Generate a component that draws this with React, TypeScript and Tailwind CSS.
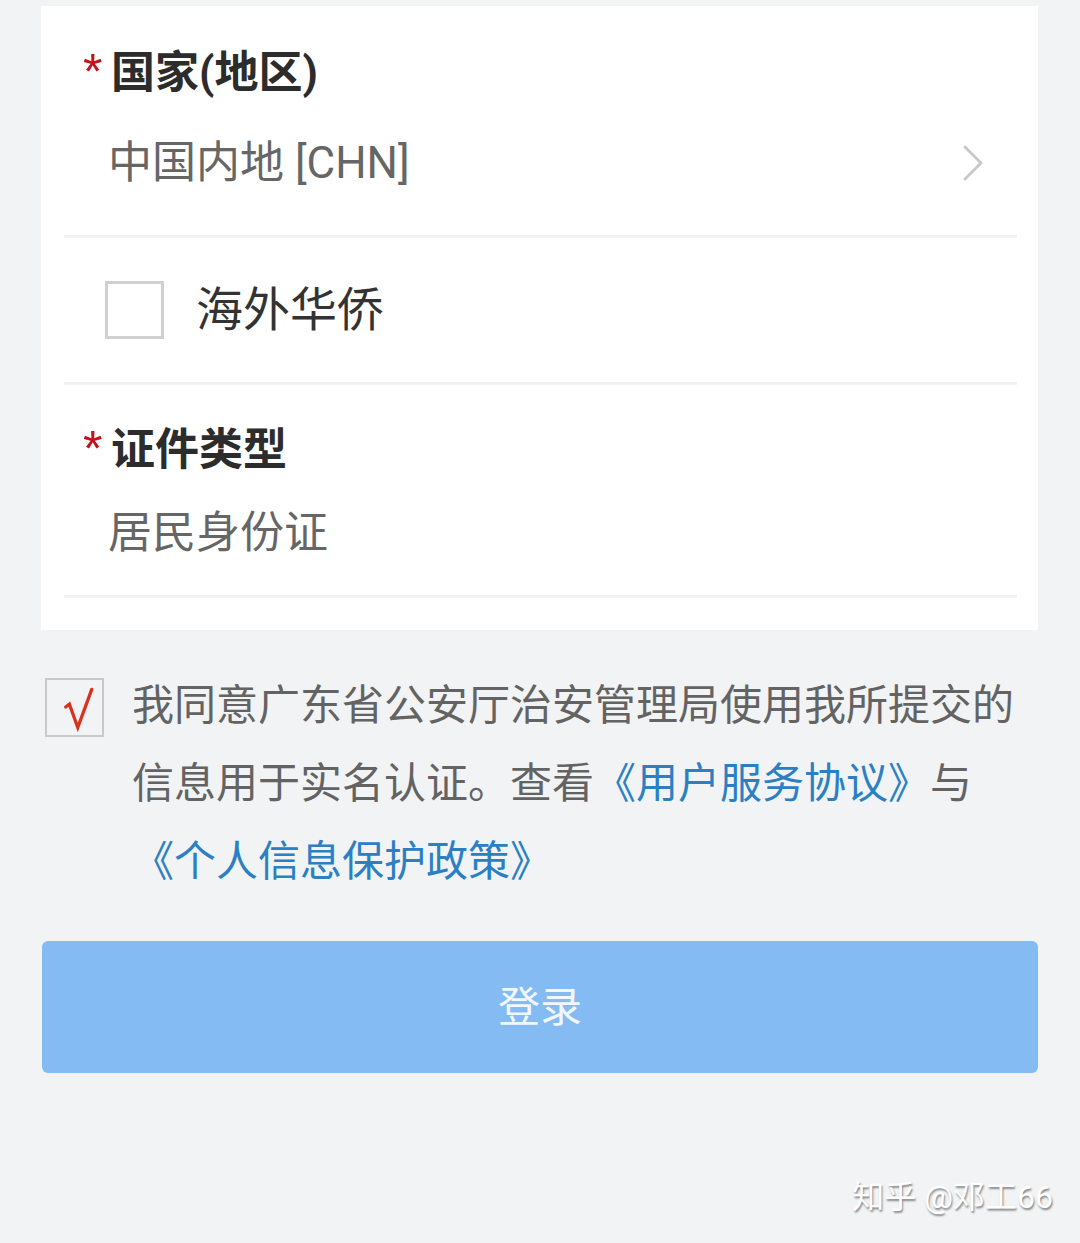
const FONT = "font-['Roboto','Noto_Sans_CJK_SC',sans-serif]";

function Required({ text }: { text: string }) {
  return (
    <div className="flex items-start pl-[19px] h-[56px]">
      <span className="w-[28px] text-[50px] leading-[48px] mt-[3px] text-[#c4121b] font-['Liberation_Sans',sans-serif]">
        *
      </span>
      <span className="text-[44px] leading-[56px] font-bold text-[#2c2c2c]">{text}</span>
    </div>
  );
}

function Divider() {
  return <div className="h-[3px] bg-[#f1f1f1]" />;
}

function ChevronRight() {
  return (
    <svg width="22" height="38" viewBox="0 0 22 38" fill="none">
      <polyline points="3,3 19,19 3,35" stroke="#c9c9c9" strokeWidth="3" strokeLinecap="round" strokeLinejoin="round" />
    </svg>
  );
}

function CheckMark() {
  return (
    <svg width="59" height="59" viewBox="0 0 59 59" fill="none">
      <polyline
        points="20,29 24,26 33,51 48,10"
        stroke="#d8321f"
        strokeWidth="3.5"
        strokeLinecap="round"
        strokeLinejoin="miter"
      />
    </svg>
  );
}

export default function App() {
  return (
    <div className={`relative w-[1080px] h-[1243px] bg-[#f2f3f5] pt-[6px] pl-[41px] pr-[42px] ${FONT}`}>
      {/* Form card */}
      <div className="bg-white pl-[23px] pr-[21px] pb-[32px]">
        {/* Country */}
        <div className="pt-[39px] pb-[44px]">
          <Required text="国家(地区)" />
          <div className="flex items-center justify-between mt-[34px] h-[56px] pl-[44px] pr-[33px]">
            <span className="text-[44px] leading-[56px] text-[#666666]">中国内地 [CHN]</span>
            <ChevronRight />
          </div>
        </div>
        <Divider />

        {/* Overseas Chinese */}
        <div className="flex items-center h-[144px] pl-[41px]">
          <div className="w-[59px] h-[58px] border-[3px] border-[#d0d0d0] bg-white" />
          <span className="ml-[32px] text-[47px] leading-[56px] text-[#333333]">海外华侨</span>
        </div>
        <Divider />

        {/* ID type */}
        <div className="pt-[37px] pb-[34px]">
          <Required text="证件类型" />
          <div className="mt-[27px] h-[56px] pl-[44px]">
            <span className="text-[44px] leading-[56px] text-[#666666]">居民身份证</span>
          </div>
        </div>
        <Divider />
      </div>

      {/* Agreement */}
      <div className="flex items-start mt-[37px] pl-[4px]">
        <div className="mt-[11px] w-[59px] h-[59px] border-[2px] border-[#c9c9c9] shrink-0 flex items-center justify-center">
          <CheckMark />
        </div>
        <p className="ml-[28px] w-[890px] text-[42px] leading-[78px] text-[#636363]">
          我同意广东省公安厅治安管理局使用我所提交的信息用于实名认证。查看<span className="text-[#2b80c4]">《用户服务协议》</span>与<br />
          <span className="text-[#2b80c4]">《个人信息保护政策》</span>
        </p>
      </div>

      {/* Login button */}
      <button className="mt-[40px] w-[996px] ml-[1px] h-[132px] rounded-[6px] bg-[#84bbf3] text-[42px] text-[#f0f7ff] flex items-center justify-center">
        登录
      </button>

      {/* Watermark */}
      <div className="absolute right-[27px] top-[1175px] text-[32px] leading-[44px] text-white [text-shadow:1px_2px_2px_rgba(0,0,0,0.45)]">
        知乎 @邓工66
      </div>
    </div>
  );
}
